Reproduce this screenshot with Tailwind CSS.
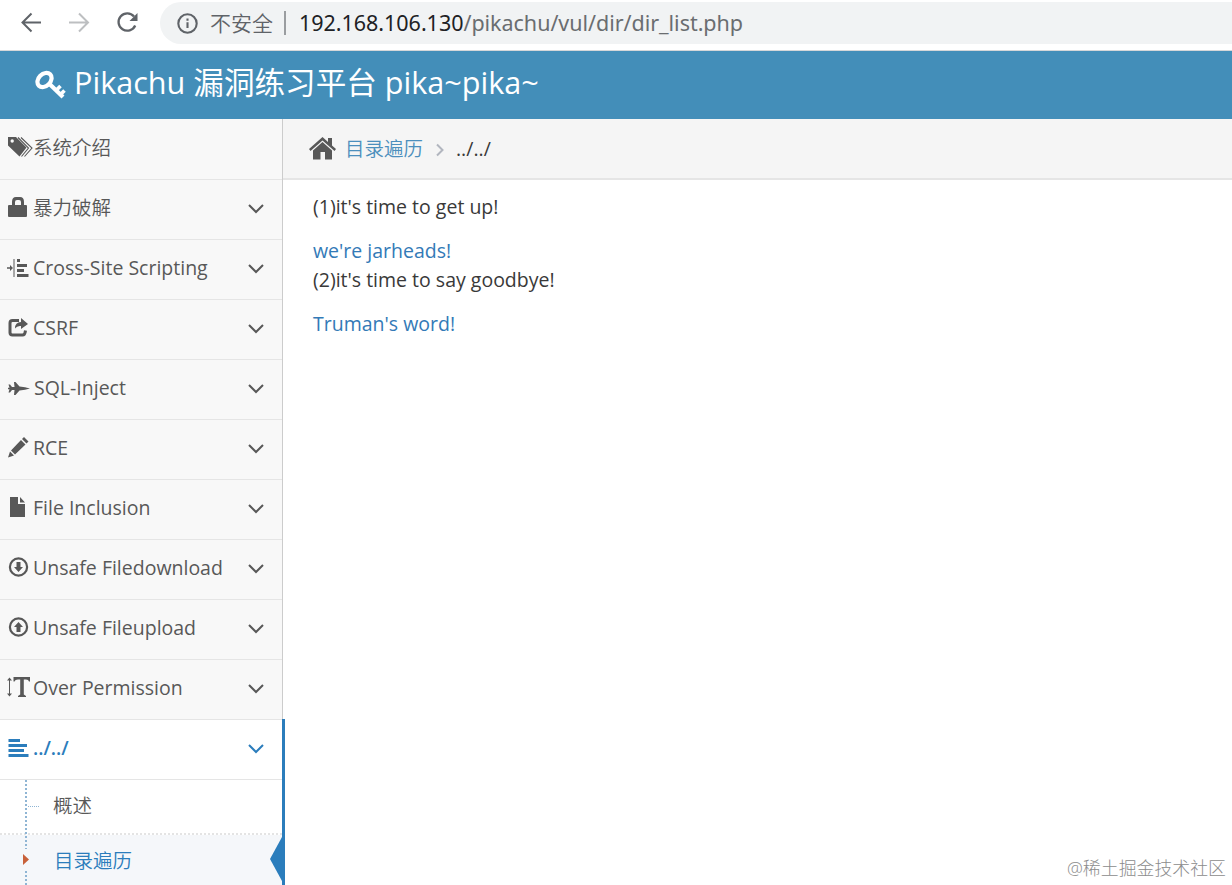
<!DOCTYPE html>
<html lang="zh">
<head>
    <meta charset="UTF-8">
    <meta name="viewport" content="width=device-width, initial-scale=1.0">
    <title>Get the pikachu</title>
    <script src="https://cdn.jsdelivr.net/npm/@tailwindcss/browser@4"></script>
</head>
<body class="h-[885px] overflow-hidden bg-white flex flex-col font-['Open_Sans','Noto_Sans_CJK_SC',sans-serif] text-[19.5px] text-[#393939]">
    <!-- browser toolbar -->
    <div class="h-[51px] shrink-0 flex items-start border-b border-[#d5d7d9] bg-white">
        <svg class="w-[160px] h-[50px] shrink-0" viewBox="0 0 160 50" fill="none" stroke="#5f6368" stroke-width="2">
            <path d="M41 22.500H22M31.500 13.500L22.500 22.500L31.500 31.500"/>
            <path stroke="#bdbfc1" d="M69 22.500H88M79 13.500L88 22.500L79 31.500"/>
            <path stroke-width="2.300" d="M134 16.500A8.700 8.700 0 1 0 135.200 25.500"/>
            <path fill="#5f6368" stroke="none" d="M137.500 13V21H129.500z"/>
        </svg>
        <div class="mt-[2px] h-[42px] flex-1 flex items-center rounded-l-full bg-[#f1f3f4] pl-[17px] whitespace-nowrap">
            <svg class="w-[21px] h-[21px] shrink-0" viewBox="0 0 21 21" fill="none" stroke="#5f6368" stroke-width="2.100">
                <circle cx="10.500" cy="10.500" r="9.200"/><path d="M10.500 9.300V15M10.500 5.500V7.700"/>
            </svg>
            <span class="ml-[12px] w-[63px] text-[21px] leading-[42px] font-[350] text-[#5f6368]">不安全</span>
            <span class="ml-[11px] w-[2px] h-[24px] bg-[#9a9da0]"></span>
            <span class="ml-[13px] text-[21.5px] leading-[42px] tracking-[-0.03px] text-[#202124] font-['Noto_Sans',sans-serif]"><span id="host">192.168.106.130</span><span class="text-[#6a6d70]">/pikachu/vul/dir/dir_list.php</span></span>
        </div>
    </div>

    <header class="h-[68px] shrink-0 bg-[#438eb9] text-white flex items-center pl-[35px] whitespace-nowrap">
        <svg class="w-[31px] h-[30px] shrink-0" viewBox="0 0 31 30" fill="none" stroke="#fff">
            <ellipse cx="9.500" cy="10" rx="8" ry="6" stroke-width="4.200" transform="rotate(-45 9.500 10)"/>
            <path stroke-width="4.200" d="M14 13.500L28 27"/>
            <path stroke-width="3.600" d="M21 20.500L25.500 16M25.500 24.500L29.500 20.500"/>
        </svg>
        <h1 class="ml-[8px] pb-[7px] text-[30.600px] leading-[60px]">Pikachu 漏洞练习平台 pika~pika~</h1>
    </header>

    <div class="flex-1 min-h-0 flex">
        <nav class="w-[285px] shrink-0 flex flex-col text-[#585858] whitespace-nowrap">
            <div id="menu" class="h-[600px] w-[283px] shrink-0 border-r border-[#ccc] bg-[#f8f8f8]"></div>

            <!-- open section -->
            <div class="relative flex-1 border-r-3 border-[#2b7dbc] bg-white">
                <div class="h-[61px] flex items-center border-y border-[#e5e5e5] pl-[6px] pr-[18px] pb-[3px] text-[#2b7dbc]">
                    <svg class="w-[27px] h-[24px]" viewBox="0 0 27 24" fill="currentColor"><path d="M2.500 3H14V6H2.500zM2.500 8H21V11H2.500zM2.500 13H18V16H2.500zM2.500 18H22.500V21H2.500z"/></svg>
                    <span class="flex-1 text-[19px] font-semibold">../../</span>
                    <svg class="w-4 h-4 mt-[2px]" viewBox="0 0 16 16" fill="none" stroke="currentColor" stroke-width="2"><path d="M1 4L8 11L15 4"/></svg>
                </div>
                <div class="h-[55px] pl-[53px] pb-[1px] flex items-center border-b-2 border-dotted border-[#e4e4e4] font-[350]">概述</div>
                <div class="h-[54px] pl-[54px] pb-[3px] flex items-center bg-[#f5f7fa] font-[350] text-[#2b7dbc]">目录遍历</div>
                <svg class="absolute left-0 top-[61px] w-[44px] h-[105px]" viewBox="0 0 44 105" fill="none">
                    <path d="M26 0V69M26 91V105" stroke="#8fb5d4" stroke-width="2" stroke-dasharray="2 2"/>
                    <path d="M28 26.500H39" stroke="#8fb5d4" stroke-dasharray="1 1"/>
                    <path d="M23 74L29 79.500L23 85z" fill="#c86139"/>
                </svg>
                <svg class="absolute right-0 top-[118px] w-[12px] h-[44px]" viewBox="0 0 12 44" fill="#2b7dbc"><path d="M12 0V44L0 22z"/></svg>
            </div>
        </nav>

        <main class="-ml-[2px] flex-1 min-w-0 whitespace-nowrap">
            <div class="h-[61px] flex items-center border-b-2 border-[#e5e5e5] bg-[#f5f5f5] pl-[26px]">
                <svg class="w-[27px] h-[23px]" viewBox="0 0 27 23" fill="#585858">
                    <path d="M13.500 0L19 5V1H23V8.500L27 12L25.500 14L13.500 3.500L1.500 14L0 12z"/>
                    <path d="M13.500 5L23 13.500V22.500H16V15H11.500V22.500H4V13.500z"/>
                </svg>
                <span class="ml-[9px] w-[78px] font-[350] text-[#4c8fbd]">目录遍历</span>
                <svg class="ml-[13px] mt-[3px] w-[8px] h-[14px]" viewBox="0 0 8 14" fill="none" stroke="#b2b6bf" stroke-width="2"><path d="M1 1.500L6.500 7L1 12.500"/></svg>
                <span class="ml-[12px]">../../</span>
            </div>
            <div id="content" class="pl-[30px] pt-[12px] leading-[29px]">
                <p class="mb-[15px]">(1)it's time to get up!</p>
                <a class="block text-[#337ab7]">we're jarheads!</a>
                <p class="mb-[15px]">(2)it's time to say goodbye!</p>
                <a class="block text-[#337ab7]">Truman's word!</a>
            </div>
        </main>
    </div>

    <div class="absolute right-[6px] bottom-[5px] text-[17.900px] leading-[24px] font-light text-[#8c8c8c] whitespace-nowrap">@稀土掘金技术社区</div>

    <script>
        // icon paths share a 27x24 box
        const items = [
            ['系统介绍', '<path fill-rule="evenodd" d="M2 1H10L20.500 11.500L13.500 20.500L2 9.500zM4.500 5a1.700 1.700 0 1 0 3.400 0a1.700 1.700 0 1 0-3.400 0"/><path d="M12 1.500L22.500 12L15.500 20.500M15 1.500L26 12L18.500 20.500" fill="none" stroke="currentColor" stroke-width="1.100"/>'],
            ['暴力破解', '<path fill-rule="evenodd" d="M2 10Q2 9 3 9H6V6Q6 1 10 1H14Q18 1 18 6V9H20Q21 9 21 10V20Q21 21 20 21H3Q2 21 2 20zM9 9H15V6Q15 4 13 4H11Q9 4 9 6z"/>'],
            ['Cross-Site Scripting', '<path d="M1 11.300H4V9L7 12L4 15V12.700H1zM7.500 3H8.500V21H7.500zM11 3H14V6H11zM11 8H21V11H11zM11 13H18V16H11zM11 18H22.500V21H11z"/>'],
            ['CSRF', '<path d="M13 4.500H6.500Q4 4.500 4 7V16.500Q4 19 6.500 19H16.500Q19 19 19.500 14.500" fill="none" stroke="currentColor" stroke-width="3"/><path d="M15 2L22 8L15 13V10Q11 9.500 9 12.500Q9 6 15 6z"/>'],
            ['SQL-Inject', '<path d="M2.500 8.500H4L6 11H8.500L8 6H9.500L13.500 10.500L19 11.300L24 12.500L19 13.700L13.500 14.500L9.500 19H8L8.500 14H6L4 16.500H2.500L3.500 13.300H2V11.700H3.500z"/>'],
            ['RCE', '<path d="M18 1L22.500 5.500L20.500 7.500L16 3zM15 4L19.500 8.500L9 18.500L5 14.500zM4 15.500L8 19.500L2 21.500z"/>'],
            ['File Inclusion', '<path d="M4 1H12V8H19V21H4zM14 1L19 6.500H14z"/>'],
            ['Unsafe Filedownload', '<circle cx="12.500" cy="11" r="8.600" fill="none" stroke="currentColor" stroke-width="2.200"/><path d="M10.500 6H14.500V11H17L12.500 16L8 11H10.500z"/>'],
            ['Unsafe Fileupload', '<circle cx="12.500" cy="11" r="8.600" fill="none" stroke="currentColor" stroke-width="2.200"/><path d="M10.500 16H14.500V11H17L12.500 6L8 11H10.500z"/>'],
            ['Over Permission', '<path d="M3.500 1.500L6 4.500H4V17.500H6L3.500 20.500L1 17.500H3V4.500H1zM7.500 1H24V5.500H23Q22.500 3.500 20 3.500H17.800V18.500L20 20V21H12V20L14.200 18.500V3.500H12Q9 3.500 8.500 5.500H7.500z"/>']
        ];
        const chevron = '<svg class="w-4 h-4 mt-[2px]" viewBox="0 0 16 16" fill="none" stroke="currentColor" stroke-width="2"><path d="M1 4L8 11L15 4"/></svg>';
        document.getElementById('menu').innerHTML = items.map(([name, icon], i) => `
            <div class="h-[60px] flex items-center border-t ${i ? 'border-[#e5e5e5]' : 'border-[#f8f8f8]'} pl-[6px] pr-[18px] pb-[3px]">
                <svg class="w-[27px] h-[24px] shrink-0" viewBox="0 0 27 24" fill="currentColor">${icon}</svg>
                <span class="flex-1 ${i < 2 ? 'font-[350]' : ''} ${i === 4 ? 'pl-px' : ''}">${name}</span>
                ${i ? chevron : ''}
            </div>`).join('');
    </script>
</body>
</html>
